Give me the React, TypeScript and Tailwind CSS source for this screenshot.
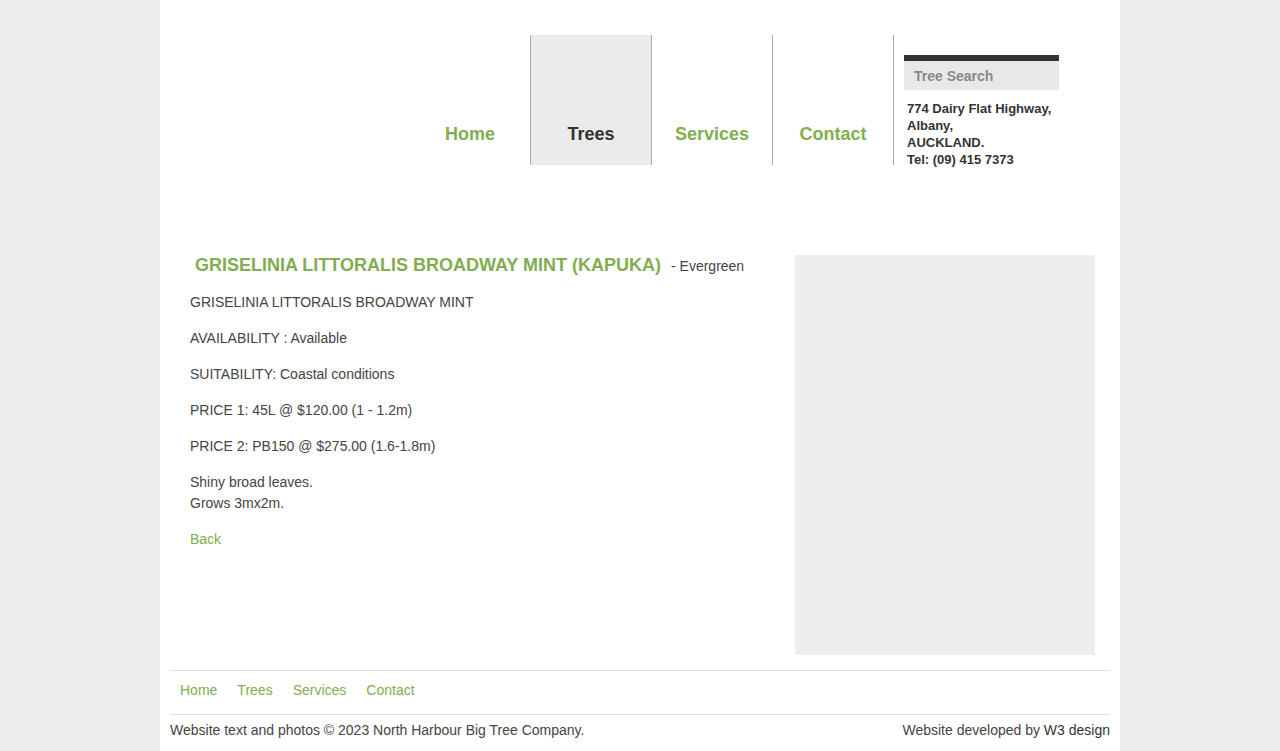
import React from "react";

const navItems = [
    { label: "Home", active: false, first: true },
    { label: "Trees", active: true, first: false },
    { label: "Services", active: false, first: false },
    { label: "Contact", active: false, first: false },
];

const footerLinks = ["Home", "Trees", "Services", "Contact"];

export default function App() {
    return (
        <div className="min-h-screen bg-[#eeeeee] font-['Liberation_Sans',Arial,sans-serif] text-[#444]">
            <div className="mx-auto min-h-screen w-[960px] bg-white">
                {/* header */}
                <header className="flex h-[255px] pl-[250px] pt-[35px]">
                    <nav className="flex h-[130px]">
                        {navItems.map((item) => (
                            <a
                                key={item.label}
                                href="#"
                                className={
                                    "flex items-end justify-center pb-[21px] text-[18px] font-bold leading-5 " +
                                    (item.first ? "w-[120px] " : "w-[121px] border-l border-[#aaaaaa] ") +
                                    (item.active ? "bg-[#ebebeb] text-[#333]" : "text-[#82ad50]")
                                }
                            >
                                {item.label}
                            </a>
                        ))}
                        <div className="border-l border-[#aaaaaa]" />
                    </nav>
                    <div className="ml-[10px] w-[155px] pt-[20px]">
                        <div className="border-t-[6px] border-[#333] bg-[#e8e8e8] px-[10px] pt-[6px] pb-[4px] text-[14px] font-bold leading-[19px] text-[#888]">
                            Tree Search
                        </div>
                        <div className="mt-[10px] pl-[3px] text-[13px] font-bold leading-[17px] text-[#333]">
                            774 Dairy Flat Highway,
                            <br />
                            Albany,
                            <br />
                            AUCKLAND.
                            <br />
                            Tel: (09) 415 7373
                        </div>
                    </div>
                </header>

                {/* main */}
                <main className="flex justify-between pl-[30px] pr-[25px]">
                    <div className="text-[14px] leading-[21px]">
                        <div className="flex items-baseline pl-[5px]">
                            <h1 className="text-[18px] font-bold leading-5 text-[#82ad50]">
                                GRISELINIA LITTORALIS BROADWAY MINT (KAPUKA)
                            </h1>
                            <span className="ml-[10px]">- Evergreen</span>
                        </div>
                        <div className="mt-[15px]">
                            <p className="mb-[15px]">GRISELINIA LITTORALIS BROADWAY MINT</p>
                            <p className="mb-[15px]">AVAILABILITY : Available</p>
                            <p className="mb-[15px]">SUITABILITY: Coastal conditions</p>
                            <p className="mb-[15px]">PRICE 1: 45L @ $120.00 (1 - 1.2m)</p>
                            <p className="mb-[15px]">PRICE 2: PB150 @ $275.00 (1.6-1.8m)</p>
                            <p className="mb-[15px]">
                                Shiny broad leaves.
                                <br />
                                Grows 3mx2m.
                            </p>
                            <a href="#" className="text-[#82ad50]">
                                Back
                            </a>
                        </div>
                    </div>
                    <div className="h-[400px] w-[300px] bg-[#eeeeee]" />
                </main>

                {/* footer */}
                <footer className="mx-[10px] mt-[15px] text-[14px] leading-5">
                    <div className="flex h-[45px] gap-5 border-y border-[#dddddd] px-[10px] pt-[9px]">
                        {footerLinks.map((l) => (
                            <a key={l} href="#" className="text-[#82ad50]">
                                {l}
                            </a>
                        ))}
                    </div>
                    <div className="flex justify-between pt-[5px]">
                        <span>Website text and photos © 2023 North Harbour Big Tree Company.</span>
                        <span>
                            Website developed by <a href="#" className="text-[#333]">W3 design</a>
                        </span>
                    </div>
                </footer>
            </div>
        </div>
    );
}
